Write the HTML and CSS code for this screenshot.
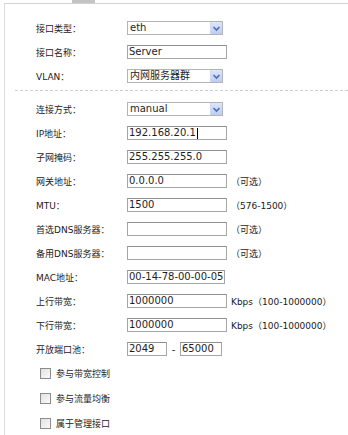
FILE: index.html
```html
<!DOCTYPE html>
<html lang="zh-CN">
<head>
<meta charset="utf-8">
<link rel="stylesheet" href="styles.css">
</head>
<body>
<div class="tabbar"><span class="tab"></span></div>
<div class="frame">
  <div class="section first">
    <div class="row"><span class="label">接口类型：</span>
      <div class="select w96"><span class="val">eth</span><span class="arrow"><svg width="9" height="7" viewBox="0 0 9 7"><path d="M1.5 2 L4.5 5 L7.5 2" fill="none" stroke="#4d6cb0" stroke-width="1.6"/></svg></span></div>
    </div>
    <div class="row"><span class="label">接口名称：</span><div class="input w100">Server</div></div>
    <div class="row"><span class="label">VLAN：</span>
      <div class="select w96"><span class="val">内网服务器群</span><span class="arrow"><svg width="9" height="7" viewBox="0 0 9 7"><path d="M1.5 2 L4.5 5 L7.5 2" fill="none" stroke="#4d6cb0" stroke-width="1.6"/></svg></span></div>
    </div>
  </div>
  <div class="dashed"></div>
  <div class="section second">
    <div class="row"><span class="label">连接方式：</span>
      <div class="select w96"><span class="val">manual</span><span class="arrow"><svg width="9" height="7" viewBox="0 0 9 7"><path d="M1.5 2 L4.5 5 L7.5 2" fill="none" stroke="#4d6cb0" stroke-width="1.6"/></svg></span></div>
    </div>
    <div class="row"><span class="label">IP地址：</span><div class="input w100">192.168.20.1<span class="caret"></span></div></div>
    <div class="row"><span class="label">子网掩码：</span><div class="input w100">255.255.255.0</div></div>
    <div class="row"><span class="label">网关地址：</span><div class="input w100">0.0.0.0</div><span class="suffix">（可选）</span></div>
    <div class="row"><span class="label">MTU：</span><div class="input w100">1500</div><span class="suffix">（576-1500）</span></div>
    <div class="row"><span class="label">首选DNS服务器：</span><div class="input w100"></div><span class="suffix">（可选）</span></div>
    <div class="row"><span class="label">备用DNS服务器：</span><div class="input w100"></div><span class="suffix">（可选）</span></div>
    <div class="row"><span class="label">MAC地址：</span><div class="input w98">00-14-78-00-00-05</div></div>
    <div class="row"><span class="label">上行带宽：</span><div class="input w100">1000000</div><span class="suffix">Kbps（100-1000000）</span></div>
    <div class="row"><span class="label">下行带宽：</span><div class="input w100">1000000</div><span class="suffix">Kbps（100-1000000）</span></div>
    <div class="row"><span class="label">开放端口池：</span><div class="input w40">2049</div><span class="dash">-</span><div class="input w42">65000</div></div>
  </div>
  <div class="checks">
    <label class="crow"><span class="box"></span><span>参与带宽控制</span></label>
    <label class="crow"><span class="box"></span><span>参与流量均衡</span></label>
    <label class="crow"><span class="box"></span><span>属于管理接口</span></label>
  </div>
</div>
</body>
</html>
```

FILE: styles.css
```css
html, body {
  margin: 0;
  padding: 0;
  background: #ffffff;
}
body {
  width: 348px;
  height: 435px;
  overflow: hidden;
  font-family: "DejaVu Sans", "Noto Sans CJK SC", sans-serif;
  font-size: 9px;
  color: #2a2a2a;
}
.tabbar {
  height: 3px;
  padding-left: 72px;
  display: flex;
}
.tab {
  width: 23px;
  height: 3px;
  background: #c4c4c4;
}
.frame {
  margin-left: 4px;
  border-top: 1px solid #d2d2d2;
  border-left: 1px solid #dcdcdc;
  height: 431px;
}
.section.first {
  padding-top: 12px;
}
.dashed {
  margin-top: 2px;
  margin-left: 10px;
  border-top: 1px dashed #cfcfcf;
}
.section.second {
  padding-top: 6px;
}
.row {
  height: 24px;
  display: flex;
  align-items: center;
  padding-left: 31px;
}
.label {
  width: 91px;
  flex: none;
  font-family: "DejaVu Sans", "Noto Sans CJK TC", sans-serif;
  font-size: 9px;
  color: #222;
}
.input, .select {
  box-sizing: border-box;
  height: 14px;
  border: 1px solid #a6a6a6;
  border-top-color: #8e8e8e;
  background: #fff;
  font-family: "DejaVu Sans", "Noto Sans CJK SC", sans-serif;
  font-size: 10px;
  line-height: 12px;
  padding-left: 1px;
  color: #1e1e1e;
  white-space: nowrap;
  display: flex;
  align-items: center;
}
.w100 { width: 100px; }
.w98 { width: 98px; }
.w96 { width: 96px; }
.w40 { width: 40px; }
.w42 { width: 42px; }
.select {
  justify-content: space-between;
  padding-left: 2px;
  border-color: #b4b4b4;
}
.select .val {
  font-family: "DejaVu Sans", "Noto Sans CJK SC", sans-serif;
}
.arrow {
  width: 12px;
  height: 12px;
  box-sizing: border-box;
  background: linear-gradient(#dce6fb, #bccdf3);
  border-left: 1px solid #d0dbf3;
  display: flex;
  align-items: center;
  justify-content: center;
}
.caret {
  display: inline-block;
  width: 1px;
  height: 11px;
  background: #000;
  margin-left: 1px;
}
.suffix {
  margin-left: 4px;
  font-family: "DejaVu Sans", "Noto Sans CJK TC", sans-serif;
  font-size: 9px;
  color: #1a1a1a;
  white-space: nowrap;
}
.dash {
  width: 13px;
  text-align: center;
  font-size: 10px;
}
.checks {
  padding-left: 35px;
}
.crow {
  height: 25px;
  display: flex;
  align-items: center;
  gap: 5px;
  font-family: "Noto Sans CJK SC", sans-serif;
  font-size: 9px;
  color: #222;
}
.box {
  width: 11px;
  height: 11px;
  box-sizing: border-box;
  border: 1px solid #8c8c8c;
  background: linear-gradient(135deg, #e2e2e2, #fafafa);
}
```
